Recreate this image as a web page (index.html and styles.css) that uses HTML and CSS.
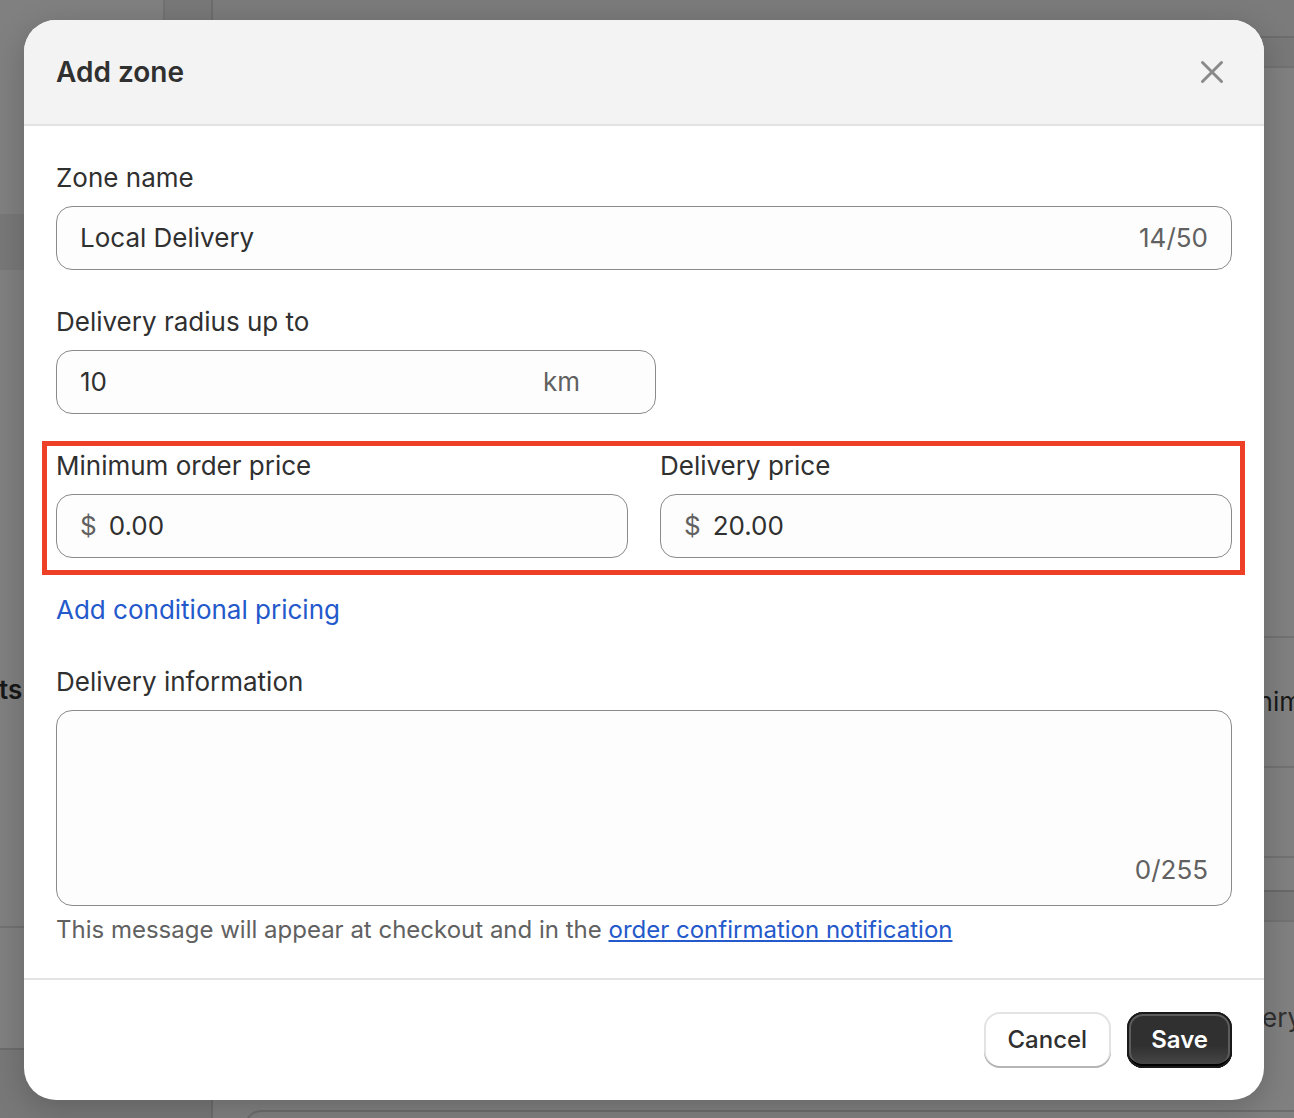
FILE: index.html
```html
<!DOCTYPE html>
<html lang="en">
<head>
<meta charset="utf-8">
<meta name="viewport" content="width=device-width, initial-scale=1">
<title>Add zone</title>
<link rel="stylesheet" href="styles.css">
</head>
<body>
<div class="page" aria-hidden="true">
  <div class="sidebar">
    <div class="nav-space"></div>
    <div class="nav-current"></div>
    <div class="nav-group">ts</div>
    <div class="nav-user"></div>
  </div>
  <div class="panel">
    <div class="panel-bar"></div>
    <div class="card card-zones">
      <div class="card-space"></div>
      <div class="card-row row-label">nim</div>
      <div class="card-row row-price"></div>
      <div class="card-row row-last"></div>
    </div>
    <div class="card card-info">
      <div class="row-muted">ery</div>
      <div class="card-box"></div>
    </div>
  </div>
</div>

<div class="overlay">
  <form class="modal" role="dialog" aria-modal="true" aria-labelledby="title">
    <header class="modal-header">
      <h2 class="modal-title" id="title">Add zone</h2>
      <button class="close" type="button" aria-label="Close">
        <svg viewBox="0 0 40 40" width="40" height="40" aria-hidden="true"><path d="M10.500 10.500L29.500 29.500M29.500 10.500L10.500 29.500"/></svg>
      </button>
    </header>
    <div class="modal-body">
      <div class="field">
        <label for="name">Zone name</label>
        <div class="control"><input id="name" type="text" value="Local Delivery" maxlength="50"><span class="affix">14/50</span></div>
      </div>
      <div class="field field-radius">
        <label for="radius">Delivery radius up to</label>
        <div class="control control-unit"><input id="radius" type="text" inputmode="numeric" value="10"><span class="affix">km</span></div>
      </div>
      <div class="field-row">
        <div class="field">
          <label for="minimum">Minimum order price</label>
          <div class="control"><span class="affix">$</span><input id="minimum" type="text" inputmode="decimal" value="0.00"></div>
        </div>
        <div class="field">
          <label for="price">Delivery price</label>
          <div class="control"><span class="affix">$</span><input id="price" type="text" inputmode="decimal" value="20.00"></div>
        </div>
      </div>
      <button class="plain" type="button">Add conditional pricing</button>
      <div class="field">
        <label for="info">Delivery information</label>
        <div class="control control-multiline"><textarea id="info" maxlength="255" aria-describedby="help"></textarea><span class="affix">0/255</span></div>
        <p class="help" id="help">This message will appear at checkout and in the <a href="#">order confirmation notification</a></p>
      </div>
    </div>
    <footer class="modal-footer">
      <button class="button" type="button">Cancel</button>
      <button class="button button-primary" type="submit">Save</button>
    </footer>
  </form>
</div>
</body>
</html>
```
FILE: styles.css
```css
* {
  box-sizing: border-box;
}

body {
  margin: 0;
  background: #787878;
  color: #303030;
  font: 425 26px/40px Inter, sans-serif;
}

input,
textarea,
button {
  margin: 0;
  padding: 0;
  border: 0;
  background: none;
  color: inherit;
  font: inherit;
}

/* Dimmed settings page behind the dialog */
.page {
  display: flex;
  align-items: flex-start;
  gap: 46px;
  height: 100vh;
  overflow: hidden;
}

.sidebar {
  flex: 0 0 165px;
  border-right: 2px solid #727272;
  border-bottom: 2px solid #6c6c6c;
  background: #808080;
}

.nav-space {
  height: 214px;
}

.nav-current {
  height: 56px;
  background: #787878;
}

.nav-group {
  height: 656px;
  padding-top: 400px;
  color: #181818;
  font-weight: 600;
  text-indent: -1px;
}

.nav-user {
  height: 122px;
  border-top: 2px solid #727272;
}

.panel {
  flex: 1;
  min-width: 0;
  height: 100%;
  border-left: 2px solid #6d6d6d;
  background: #787878;
}

.panel-bar {
  height: 38px;
  border-bottom: 2px solid #6d6d6d;
  background: #7b7b7b;
}

.card {
  margin: 28px 0 0 34px;
  border-top: 2px solid #727272;
  background: #808080;
}

.card-zones {
  border-bottom: 2px solid #696969;
}

.card-space {
  height: 568px;
}

.card-row {
  border-top: 2px solid #727272;
}

.row-label,
.row-muted {
  display: flex;
  justify-content: flex-end;
  margin-right: -8px;
}

.row-label {
  height: 130px;
  padding-top: 44px;
  color: #181818;
}

.row-price {
  height: 90px;
}

.row-last {
  height: 34px;
}

.card-info {
  margin: 28px 0 0;
}

.row-muted {
  height: 188px;
  padding-top: 76px;
  color: #303030;
}

.card-box {
  height: 60px;
  margin-left: 32px;
  border: 2px solid #6d6d6d;
  border-right: 0;
  border-radius: 16px 0 0 0;
}

/* Dialog */
.overlay {
  position: absolute;
  inset: 0 0 auto;
  padding: 20px 30px 18px 24px;
}

.modal {
  overflow: hidden;
  border-radius: 32px;
  background: #fff;
  box-shadow: 0 8px 32px rgba(0, 0, 0, 0.2);
}

.modal-header {
  display: flex;
  align-items: center;
  justify-content: space-between;
  padding: 32px;
  border-bottom: 2px solid #e3e3e3;
  background: #f3f3f3;
}

.modal-title {
  margin: 0;
  font-size: 28px;
  font-weight: 600;
}

.close {
  display: flex;
}

.close svg {
  fill: none;
  stroke: #8a8a8a;
  stroke-width: 3;
  stroke-linecap: round;
}

.modal-body {
  display: flex;
  flex-direction: column;
  gap: 32px;
  padding: 32px;
}

.field {
  display: flex;
  flex: 1;
  flex-direction: column;
  gap: 8px;
  min-width: 0;
}

.field-radius {
  width: calc(50% + 12px);
}

.field-row {
  position: relative;
  display: flex;
  gap: 32px;
}

/* Highlight frame round the two prices */
.field-row::after {
  position: absolute;
  inset: -5px -13px -17px -14px;
  border: 5px solid #ee4026;
  content: "";
  pointer-events: none;
}

.control {
  display: flex;
  align-items: center;
  gap: 12px;
  height: 64px;
  padding: 0 23px;
  border: 1px solid #8a8a8a;
  border-radius: 16px;
  background: #fdfdfd;
}

.control input,
.control textarea {
  flex: 1;
  min-width: 0;
  height: 40px;
  outline: 0;
}

.control-unit {
  padding-right: 75px;
}

.control-multiline {
  align-items: flex-end;
  height: 196px;
  padding: 15px 23px;
}

.control-multiline textarea {
  height: 100%;
  resize: none;
}

.affix {
  color: #616161;
}

.plain {
  align-self: flex-start;
  color: #2459cb;
}

.help {
  margin: 0;
  color: #616161;
  font-size: 24px;
  line-height: 32px;
}

.help a {
  color: #2459cb;
}

.modal-footer {
  display: flex;
  justify-content: flex-end;
  gap: 16px;
  padding: 32px;
  border-top: 2px solid #e3e3e3;
}

.button {
  height: 56px;
  padding: 0 24px;
  border-radius: 16px;
  box-shadow: inset 0 -2px #b5b5b5, inset 0 0 0 2px #e3e3e3;
  font-size: 24px;
  font-weight: 525;
}

.button-primary {
  background: linear-gradient(#303030 60%, #4a4a4a);
  box-shadow: inset 0 0 0 2px #1a1a1a, inset 0 -4px #000, inset 0 0 0 4px #5c5c5c;
  color: #fff;
  font-weight: 600;
}
```
